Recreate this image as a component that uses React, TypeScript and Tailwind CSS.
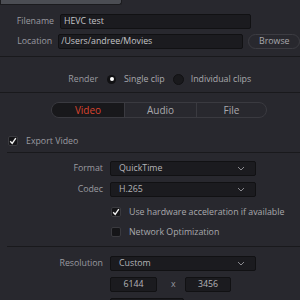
const font = { fontFamily: '"Open Sans", "Liberation Sans", sans-serif' };

function Chevron() {
  return (
    <svg width="8" height="5" viewBox="0 0 8 5" className="shrink-0">
      <path d="M1 1 L4 4 L7 1" fill="none" stroke="#8a8a8f" strokeWidth="1" />
    </svg>
  );
}

function Check({ on }: { on: boolean }) {
  return (
    <div className="w-[10px] h-[10px] rounded-[2px] bg-[#151518] border border-[#3a3a3f] flex items-center justify-center shrink-0">
      {on && (
        <svg width="8" height="8" viewBox="0 0 8 8">
          <path d="M1.2 4.2 L3.2 6.4 L6.8 1.2" fill="none" stroke="#f2f2f2" strokeWidth="1.4" />
        </svg>
      )}
    </div>
  );
}

function Select({ value, w }: { value: string; w: string }) {
  return (
    <div className={`${w} h-[15px] bg-[#1b1b1f] border border-[#111113] rounded-[2px] flex items-center justify-between pl-[8px] pr-[10px] text-[#b4b4b8]`}>
      <span>{value}</span>
      <Chevron />
    </div>
  );
}

export default function App() {
  return (
    <div className="w-[300px] h-[300px] overflow-hidden bg-[#28282e] text-[8.8px] text-[#9a9aa0] leading-none" style={font}>
      <div className="w-[122px] h-[5px] bg-[#4b4d53] border border-t-0 border-[#1b1b1e] rounded-br-[3px]" />

      {/* File name & location */}
      <div className="mt-[9px] flex flex-col gap-[5px]">
        <div className="flex items-center">
          <span className="w-[54px] text-right">Filename</span>
          <div className="ml-[6px] w-[191px] h-[15px] bg-[#1b1b1f] border border-[#111113] rounded-[2px] flex items-center pl-[3px] text-[#c4c4c8]">
            HEVC test
          </div>
        </div>
        <div className="flex items-center">
          <span className="w-[54px] text-right">Location</span>
          <div className="ml-[6px] w-[191px] h-[15px] bg-[#1b1b1f] border border-[#111113] rounded-[2px] flex items-center pl-[2px] text-[#c4c4c8] whitespace-nowrap overflow-hidden">
            /Users/andree/Movies
          </div>
          <div className="ml-[5px] w-[52px] h-[15px] shrink-0 rounded-full border border-[#3c3c42] flex items-center pl-[10px] text-[#a8a8ad]">
            Browse
          </div>
        </div>
      </div>

      <div className="mt-[7px] h-px bg-[#19191c]" />

      {/* Render mode */}
      <div className="mt-[15px] h-[14px] flex items-center">
        <span className="w-[98px] text-right">Render</span>
        <div className="ml-[9px] w-[9px] h-[9px] rounded-full bg-[#111113] flex items-center justify-center">
          <div className="w-[4px] h-[4px] rounded-full bg-white" />
        </div>
        <span className="ml-[8px] text-[#a8a8ad]">Single clip</span>
        <div className="ml-[8px] w-[11px] h-[11px] rounded-full bg-[#19191c] border border-[#111113]" />
        <span className="ml-[7px] text-[#a8a8ad]">Individual clips</span>
      </div>

      <div className="mt-[6px] h-px bg-[#19191c]" />

      {/* Tabs */}
      <div className="mt-[9px] ml-[51px] w-[216px] h-[16px] rounded-full border border-[#3a3a40] flex overflow-hidden text-[10px]">
        <div className="w-[72px] bg-[#18181b] flex items-center justify-center text-[#d9442f]">Video</div>
        <div className="w-[72px] border-l border-[#3a3a40] flex items-center justify-center text-[#a8a8ad]">Audio</div>
        <div className="flex-1 border-l border-[#3a3a40] flex items-center justify-center text-[#a8a8ad]">File</div>
      </div>

      {/* Export video */}
      <div className="mt-[18px] ml-[8px] flex items-center gap-[8px]">
        <Check on />
        <span>Export Video</span>
      </div>
      <div className="mt-[6px] ml-[7px] h-px bg-[#19191c]" />

      {/* Format / codec */}
      <div className="mt-[8px] flex flex-col gap-[6px]">
        <div className="flex items-center">
          <span className="w-[103px] text-right">Format</span>
          <div className="ml-[7px]"><Select value="QuickTime" w="w-[146px]" /></div>
        </div>
        <div className="flex items-center">
          <span className="w-[103px] text-right">Codec</span>
          <div className="ml-[7px]"><Select value="H.265" w="w-[146px]" /></div>
        </div>
      </div>
      <div className="mt-[10px] ml-[111px] flex items-center gap-[8px]">
        <Check on />
        <span className="text-[#a8a8ad] whitespace-nowrap">Use hardware acceleration if available</span>
      </div>
      <div className="mt-[10px] ml-[111px] flex items-center gap-[8px]">
        <Check on={false} />
        <span className="text-[#a8a8ad]">Network Optimization</span>
      </div>

      <div className="mt-[9px] ml-[7px] h-px bg-[#19191c]" />

      {/* Resolution */}
      <div className="mt-[9px] flex items-center">
        <span className="w-[103px] text-right">Resolution</span>
        <div className="ml-[7px]"><Select value="Custom" w="w-[146px]" /></div>
      </div>
      <div className="mt-[6px] ml-[110px] flex items-center">
        <div className="w-[47px] h-[15px] bg-[#1b1b1f] border border-[#111113] rounded-[2px] flex items-center justify-center text-[#b4b4b8]">6144</div>
        <span className="ml-[14px] w-[14px]">x</span>
        <div className="w-[46px] h-[15px] bg-[#1b1b1f] border border-[#111113] rounded-[2px] flex items-center justify-center text-[#b4b4b8]">3456</div>
      </div>
      <div className="mt-[6px] ml-[110px] w-[74px] h-[15px] bg-[#1b1b1f] border border-[#111113] rounded-[2px]" />
    </div>
  );
}
